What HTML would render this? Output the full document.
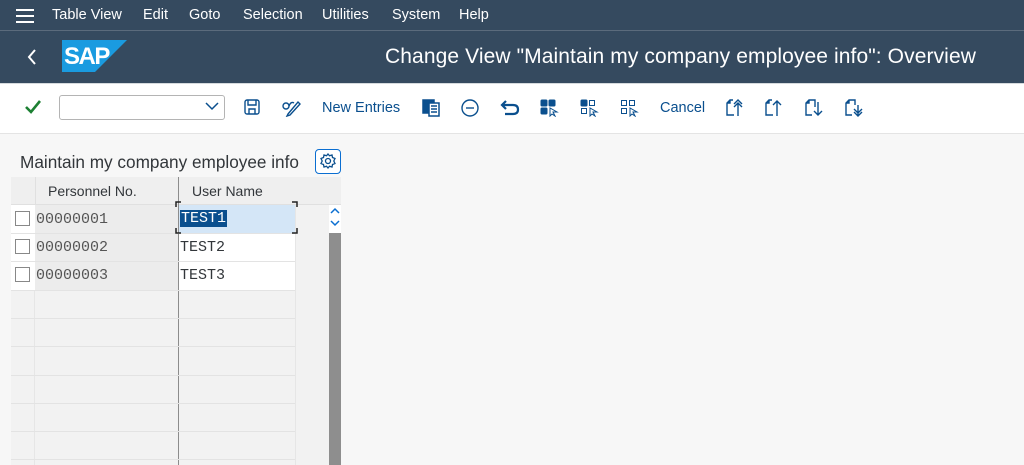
<!DOCTYPE html>
<html><head><meta charset="utf-8"><style>
*{margin:0;padding:0;box-sizing:border-box}
body{width:1024px;height:465px;overflow:hidden;background:#f7f7f7;font-family:"Liberation Sans",sans-serif;position:relative}
.abs{position:absolute}
#menu{left:0;top:0;width:1024px;height:31px;background:#354a5f;border-bottom:1px solid #5b6b7c}
#menu span{position:absolute;top:7px;color:#fff;font-size:14.5px}
#title{left:0;top:31px;width:1024px;height:52px;background:#354a5f}
#tb{left:0;top:83px;width:1024px;height:51px;background:#fff;border-bottom:1px solid #e4e4e4;border-top:1px solid #d5dadd}
.tbt{position:absolute;top:16px;color:#0a4f8e;font-size:14.5px}
.ic{position:absolute;top:97px}
.cell{position:absolute;font-family:"Liberation Mono",monospace;font-size:15px;color:#555}
.hl{position:absolute;height:1px;background:#e3e3e3}
</style></head><body>
<div id="menu" class="abs">
 <div class="abs" style="left:16px;top:9px;width:18px;height:2px;background:#fff"></div>
 <div class="abs" style="left:16px;top:15px;width:18px;height:2px;background:#fff"></div>
 <div class="abs" style="left:16px;top:21px;width:18px;height:2px;background:#fff"></div>
 <span style="left:52px">Table View</span>
 <span style="left:143px">Edit</span>
 <span style="left:189px">Goto</span>
 <span style="left:243px">Selection</span>
 <span style="left:322px">Utilities</span>
 <span style="left:392px">System</span>
 <span style="left:459px">Help</span>
</div>
<div id="title" class="abs">
 <svg class="abs" style="left:26px;top:17px" width="12" height="18"><path d="M9 2 L3 9 L9 16" stroke="#fff" stroke-width="2" fill="none"/></svg>
 <svg class="abs" style="left:62px;top:9px" width="65" height="32"><polygon points="0,0 65,0 33,32 0,32" fill="#1a9be0"/><text x="2" y="24" font-family="Liberation Sans" font-weight="900" font-size="24" fill="#fff" letter-spacing="-1.5">SAP</text></svg>
 <div class="abs" style="left:385px;top:14px;color:#fff;font-size:21px;letter-spacing:0.1px;white-space:nowrap">Change View "Maintain my company employee info": Overview</div>
</div>
<div id="tb" class="abs"></div>
<svg class="abs" style="left:24px;top:99px" width="18" height="16"><path d="M2 8 L7 13 L16 2" stroke="#1d8033" stroke-width="2.6" fill="none"/></svg>
<div class="abs" style="left:59px;top:95px;width:166px;height:25px;border:1px solid #b4b4b4;border-radius:3px;background:#fff"></div>
<svg class="abs" style="left:205px;top:101px" width="14" height="10"><path d="M1 2 L7 8 L13 2" stroke="#0a4f8e" stroke-width="1.5" fill="none"/></svg>
<svg class="ic" style="left:243px" width="18" height="20" stroke="#0a4f8e" fill="none" stroke-width="1.4"><rect x="2" y="3" width="14" height="14" rx="2"/><path d="M5 3 V8 H13 V3 M6 17 V12 H12 V17"/></svg>
<svg class="ic" style="left:281px" width="20" height="20" stroke="#0a4f8e" fill="none" stroke-width="1.4"><circle cx="5" cy="9" r="3"/><path d="M8 9 Q10 4 13 6 M7 17 L17 5 L19 7 L9 18 L6 19 Z"/></svg>
<div class="tbt" style="left:322px;top:100px;position:absolute">New Entries</div>
<svg class="ic" style="left:421px" width="20" height="20" stroke="#0a4f8e" fill="none" stroke-width="1.5"><rect x="2" y="3" width="11" height="13" fill="#0a4f8e"/><rect x="8" y="6" width="10" height="13" fill="#fff"/><path d="M10 9 H16 M10 12 H16 M10 15 H16"/></svg>
<svg class="ic" style="left:460px" width="20" height="20" stroke="#0a4f8e" fill="none" stroke-width="1.4"><circle cx="10" cy="11" r="8"/><path d="M6 11 H14"/></svg>
<svg class="ic" style="left:500px" width="20" height="20" stroke="#0a4f8e" fill="none" stroke-width="2.2"><path d="M6 4 L2 8 L6 12 M2 8 H13 Q18 8 18 12.5 Q18 17 13 17 H5"/></svg>
<svg class="ic" style="left:540px" width="20" height="20" fill="#0a4f8e" stroke="#0a4f8e"><rect x="1" y="3" width="6" height="6" rx="1"/><rect x="9" y="3" width="6" height="6" rx="1"/><rect x="1" y="11" width="6" height="6" rx="1"/><path d="M10 11 L10 19 L12 17 L15 19 L13 15 L17 15 Z" fill="#fff" stroke-width="1"/></svg>
<svg class="ic" style="left:580px" width="20" height="20" stroke="#0a4f8e"><rect x="1" y="3" width="6" height="6" rx="1" fill="#0a4f8e"/><rect x="9.5" y="3.5" width="5" height="5" fill="none"/><rect x="1.5" y="11.5" width="5" height="5" fill="none"/><path d="M10 11 L10 19 L12 17 L15 19 L13 15 L17 15 Z" fill="#fff"/></svg>
<svg class="ic" style="left:620px" width="20" height="20" stroke="#0a4f8e" fill="none"><rect x="1.5" y="3.5" width="5" height="5"/><rect x="9.5" y="3.5" width="5" height="5"/><rect x="1.5" y="11.5" width="5" height="5"/><path d="M10 11 L10 19 L12 17 L15 19 L13 15 L17 15 Z" fill="#fff"/></svg>
<div class="tbt" style="left:660px;top:100px;position:absolute">Cancel</div>
<svg class="ic" style="left:725px" width="20" height="20" stroke="#0a4f8e" fill="none" stroke-width="1.4"><path d="M9 18 H2 V6 L5 3 H8"/><path d="M5 3 V6 H2" fill="#0a4f8e"/><path d="M13 19 V6 M9 10 L13 6 L17 10 M9 7 L13 3 L17 7"/></svg>
<svg class="ic" style="left:764px" width="20" height="20" stroke="#0a4f8e" fill="none" stroke-width="1.4"><path d="M9 18 H2 V6 L5 3 H8"/><path d="M5 3 V6 H2" fill="#0a4f8e"/><path d="M13 19 V4 M9 8 L13 4 L17 8"/></svg>
<svg class="ic" style="left:804px" width="20" height="20" stroke="#0a4f8e" fill="none" stroke-width="1.4"><path d="M8 18 H2 V6 L5 3 H11 V10"/><path d="M5 3 V6 H2" fill="#0a4f8e"/><path d="M14 5 V18 M10 14 L14 18 L18 14"/></svg>
<svg class="ic" style="left:844px" width="20" height="20" stroke="#0a4f8e" fill="none" stroke-width="1.4"><path d="M8 18 H2 V6 L5 3 H11 V8"/><path d="M5 3 V6 H2" fill="#0a4f8e"/><path d="M14 8 V19 M10 12 L14 16 L18 12 M10 15 L14 19 L18 15"/></svg>

<div class="abs" style="left:20px;top:152px;font-size:17.2px;color:#32363a;white-space:nowrap">Maintain my company employee info</div>
<div class="abs" style="left:315px;top:149px;width:26px;height:25px;border:1px solid #0a6ed1;border-radius:4px;background:#fff"></div>
<svg class="abs" style="left:319px;top:152px" width="18" height="18" stroke="#0a4f8e" fill="none" stroke-width="1.3"><circle cx="9" cy="9" r="2.5"/><path d="M9 2 L10.5 3.8 L13 3 L13.5 5.5 L16 6.5 L14.8 9 L16 11.5 L13.5 12.5 L13 15 L10.5 14.2 L9 16 L7.5 14.2 L5 15 L4.5 12.5 L2 11.5 L3.2 9 L2 6.5 L4.5 5.5 L5 3 L7.5 3.8 Z"/></svg>

<!-- table -->
<div class="abs" style="left:11px;top:177px;width:330px;height:288px;background:#f2f2f2"></div>
<div class="abs" style="left:11px;top:177px;width:330px;height:28px;background:#efefef;border-bottom:1px solid #e0e0e0"></div>
<div class="abs" style="left:11px;top:205px;width:24px;height:260px;background:#f2f2f2;border-right:1px solid #e6e6e6"></div>
<div class="abs" style="left:11px;top:205px;width:24px;height:85px;background:#fff"></div>
<div class="abs" style="left:35px;top:205px;width:143px;height:85px;background:#ececec"></div>
<div class="abs" style="left:179px;top:205px;width:116px;height:85px;background:#fff"></div>
<div class="abs" style="left:179px;top:205px;width:116px;height:28px;background:#d4e6f7"></div>
<div class="abs" style="left:178px;top:177px;width:1px;height:288px;background:#8c8c8c"></div>
<div class="abs" style="left:295px;top:205px;width:1px;height:260px;background:#e6e6e6"></div>
<div class="abs" style="left:35px;top:177px;width:1px;height:28px;background:#e0e0e0"></div>
<div class="abs" style="left:48px;top:183px;font-size:14px;color:#32363a">Personnel No.</div>
<div class="abs" style="left:192px;top:183px;font-size:14px;color:#32363a">User Name</div>
<div class="hl" style="left:11px;top:233px;width:284px"></div>
<div class="hl" style="left:11px;top:261px;width:284px"></div>
<div class="hl" style="left:11px;top:290px;width:284px"></div>
<div class="hl" style="left:11px;top:318px;width:284px"></div>
<div class="hl" style="left:11px;top:346px;width:284px"></div>
<div class="hl" style="left:11px;top:375px;width:284px"></div>
<div class="hl" style="left:11px;top:403px;width:284px"></div>
<div class="hl" style="left:11px;top:431px;width:284px"></div>
<div class="hl" style="left:11px;top:459px;width:284px"></div>
<div class="abs" style="left:15px;top:211px;width:15px;height:15px;border:1px solid #888;background:#fff"></div>
<div class="abs" style="left:15px;top:239px;width:15px;height:15px;border:1px solid #888;background:#fff"></div>
<div class="abs" style="left:15px;top:267px;width:15px;height:15px;border:1px solid #888;background:#fff"></div>
<div class="cell" style="left:36px;top:211px">00000001</div>
<div class="cell" style="left:36px;top:239px">00000002</div>
<div class="cell" style="left:36px;top:267px">00000003</div>
<div class="cell" style="left:180px;top:210px;background:#0a4f8e;color:#fff;padding:0 1px">TEST1</div>
<div class="cell" style="left:180px;top:239px;color:#32363a">TEST2</div>
<div class="cell" style="left:180px;top:267px;color:#32363a">TEST3</div>
<svg class="abs" style="left:175px;top:201px" width="124" height="34" stroke="#222" fill="none" stroke-width="1.5"><path d="M1 6 V1 H6 M117 1 H122 V6 M1 27 V32 H6 M117 32 H122 V27"/></svg>
<div class="abs" style="left:329px;top:205px;width:12px;height:28px;background:#fff"></div>
<svg class="abs" style="left:329px;top:205px" width="12" height="28" stroke="#0a6ed1" fill="none" stroke-width="1.5"><path d="M2 8 L6 4 L10 8 M2 16 L6 20 L10 16"/></svg>
<div class="abs" style="left:329px;top:233px;width:12px;height:232px;background:#8e8e8e"></div>
</body></html>
